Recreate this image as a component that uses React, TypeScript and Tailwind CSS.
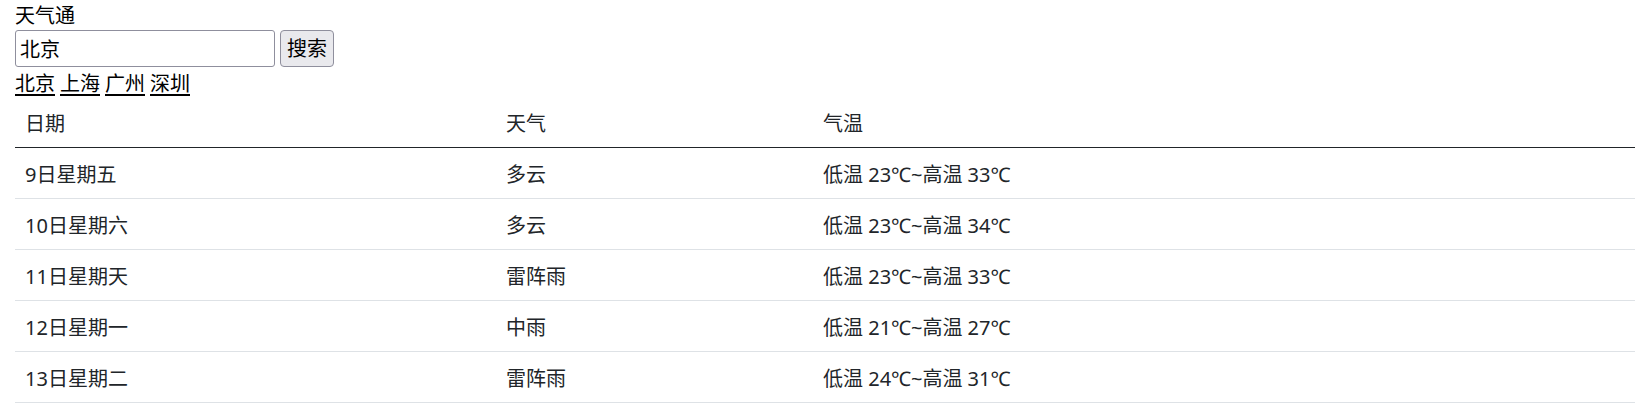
const days = [
  { date: '9日星期五', weather: '多云', temp: '低温 23℃~高温 33℃' },
  { date: '10日星期六', weather: '多云', temp: '低温 23℃~高温 34℃' },
  { date: '11日星期天', weather: '雷阵雨', temp: '低温 23℃~高温 33℃' },
  { date: '12日星期一', weather: '中雨', temp: '低温 21℃~高温 27℃' },
  { date: '13日星期二', weather: '雷阵雨', temp: '低温 24℃~高温 31℃' },
];

const cities = ['北京', '上海', '广州', '深圳'];

export default function App() {
  return (
    <div className="px-[15px] bg-white text-[20px] leading-[30px] text-[#212529] font-['Noto_Sans','Noto_Sans_CJK_SC',sans-serif]">
      <div className="text-black pt-[1px] h-[30px]">天气通</div>
      <div className="flex gap-[5px] h-[37px]">
        <input
          type="text"
          defaultValue="北京"
          className="w-[260px] h-[37px] px-[4px] border border-[#8f8f9d] rounded-[3px] text-black outline-none"
        />
        <button className="w-[54px] h-[37px] bg-[#e9e9ed] border border-[#8f8f9d] rounded-[4px] text-black">
          搜索
        </button>
      </div>
      <div className="flex gap-[5px] text-black pt-[2px] h-[30px]">
        {cities.map((c) => (
          <a key={c} href="#" className="underline underline-offset-[3px]">
            {c}
          </a>
        ))}
      </div>
      <table className="w-full border-collapse">
        <thead>
          <tr className="border-b border-[#212529]">
            <th className="w-[481px] px-[10px] pt-[12px] pb-[8px] text-left font-normal">日期</th>
            <th className="w-[317px] px-[10px] pt-[12px] pb-[8px] text-left font-normal">天气</th>
            <th className="px-[10px] pt-[12px] pb-[8px] text-left font-normal">气温</th>
          </tr>
        </thead>
        <tbody>
          {days.map((d) => (
            <tr key={d.date} className="border-b border-[#dee2e6]">
              <td className="px-[10px] pt-[12px] pb-[8px]">{d.date}</td>
              <td className="px-[10px] pt-[12px] pb-[8px]">{d.weather}</td>
              <td className="px-[10px] pt-[12px] pb-[8px]">{d.temp}</td>
            </tr>
          ))}
        </tbody>
      </table>
    </div>
  );
}
